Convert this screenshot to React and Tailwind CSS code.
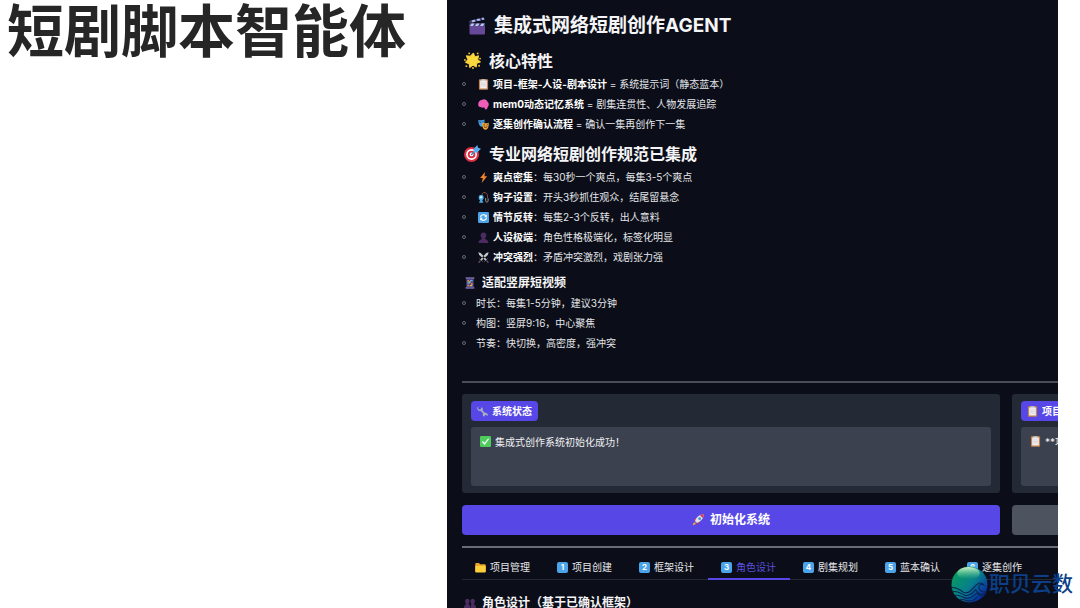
import { useState } from "react";

function Icon({ className = "size-[11px]", children }) {
  return (
    <svg aria-hidden="true" className={`shrink-0 ${className}`} viewBox="0 0 36 36">
      {children}
    </svg>
  );
}

function ClapperIcon() {
  return (
    <Icon className="size-[18px]">
      <path d="M3 13h31v20a2 2 0 0 1-2 2H5a2 2 0 0 1-2-2z" fill="#67499a" />
      <path d="M3 13h31v5H3z" fill="#4a4378" />
      <path d="M7 13h6l-3 5H4zM17 13h6l-3 5h-6zM27 13h6l-3 5h-6z" fill="#b9c8f2" />
      <path d="M2 8 31 1l2 4L4 12z" fill="#4a4378" />
      <path d="m7 7 6-2 2 4-6 2zM17 4l6-1 2 4-6 1zM27 2l4-1 2 4-4 1z" fill="#a9bdf0" />
    </Icon>
  );
}

function SunIcon() {
  return (
    <Icon className="size-[17px]">
      <path
        d="m20 2 3 8 8-2-2 8 6 5-8 3-1 8-7-4-7 5-1-8-8-3 5-6-3-8 8 1z"
        fill="#fbd83d"
        stroke="#fbd83d"
        strokeLinejoin="round"
        strokeWidth="2"
      />
      <g fill="#f3bd3c">
        <circle cx="11" cy="3" r="2" />
        <circle cx="29" cy="3" r="2" />
        <circle cx="34" cy="14" r="2" />
        <circle cx="32" cy="29" r="2" />
        <circle cx="19" cy="34" r="2" />
        <circle cx="5" cy="30" r="2" />
        <circle cx="2" cy="17" r="2" />
      </g>
    </Icon>
  );
}

function TargetIcon() {
  return (
    <Icon className="size-[17px]">
      <circle cx="16" cy="20" r="16" fill="#dd2e44" />
      <circle cx="16" cy="20" r="11.5" fill="#fff" />
      <circle cx="16" cy="20" r="8" fill="#dd2e44" />
      <circle cx="16" cy="20" r="4" fill="#fff" />
      <path d="m15 21 14-14" stroke="#4787b8" strokeWidth="3" />
      <path d="m20 9 8-9 2 6 6 2-8 8h-7z" fill="#55acee" />
    </Icon>
  );
}

function ClipboardIcon() {
  return (
    <Icon>
      <rect x="3" y="1" width="30" height="34" rx="3" fill="#c1834f" />
      <path d="M7 5h22v26H7z" fill="#f3eef0" />
      <path d="M11 1h14v6H11z" fill="#ccd6dd" />
      <path d="M10 13h16M10 18h16M10 23h16" stroke="#c9cbd5" strokeWidth="2" />
    </Icon>
  );
}

function BrainIcon() {
  return (
    <Icon>
      <path
        d="M13 3c7-4 16-1 18 6 5 4 6 12 1 16-1 7-5 10-8 9l-4-7c-5 3-9 1-11-1-5 1-9-3-8-9-1-7 5-14 12-14z"
        fill="#f45fbd"
      />
      <path
        d="M8 13c4-4 8-1 10 1m-8 8c4 1 7-1 8-4m4-11c-3 3 2 6 6 5m-5 10c4 1 7-2 8-5"
        fill="none"
        stroke="#d84fa8"
        strokeWidth="2"
      />
    </Icon>
  );
}

function MasksIcon() {
  return (
    <Icon>
      <path d="M1 3c7 2 13 2 20-1 1 10 0 21-8 23C6 26 1 15 1 3z" fill="#4d9ee0" />
      <path d="m5 10 5 1m4-1 4-2" stroke="#17446f" strokeWidth="3" />
      <path d="M14 12c8 3 14 3 21 0 1 11-2 22-10 23-9 0-12-12-11-23z" fill="#f2a83b" />
      <path d="m18 19 5 1m5 0 4-2M19 25c4 3 8 3 12 0" stroke="#4a2a15" strokeWidth="3" fill="none" />
    </Icon>
  );
}

function BoltIcon() {
  return (
    <Icon>
      <path d="M23 0 7 20h9l-4 16 18-22h-9z" fill="#f4852b" />
    </Icon>
  );
}

function HookIcon() {
  return (
    <Icon>
      <path d="M12 13C12 3 18 1 23 2c7 2 9 8 8 18" fill="none" stroke="#805444" strokeWidth="3" />
      <path d="M3 14c0-6 15-6 15 0 2 6-1 11-4 14l4 7H3l4-7c-4-3-6-8-4-14z" fill="#4ba9df" />
      <circle cx="10" cy="17" r="4" fill="#c8edff" />
      <path d="M25 20v8c0 7 8 7 8 0v-7" fill="none" stroke="#a3a7af" strokeWidth="3" />
    </Icon>
  );
}

function RepeatIcon() {
  return (
    <Icon>
      <rect width="36" height="36" rx="4" fill="#4ba4ea" />
      <path
        d="M8 17c1-9 13-11 18-4M28 19c-1 9-13 11-18 4"
        fill="none"
        stroke="#fff"
        strokeWidth="4"
      />
      <path d="M29 8v9h-9zM7 28v-9h9z" fill="#fff" />
    </Icon>
  );
}

function PersonIcon() {
  return (
    <Icon>
      <path
        d="M18 2c12 0 11 14 5 19 0 4 10 3 11 13v2H2v-2c1-10 11-9 11-13C7 16 6 2 18 2z"
        fill="#4b2c61"
      />
    </Icon>
  );
}

function SwordsIcon() {
  return (
    <Icon>
      <path d="m1 1 8 2 20 22-4 4L4 10zM35 1l-8 2L7 25l4 4 21-19z" fill="#c3c8cf" />
      <path d="m21 31 10-9M5 22l10 9" stroke="#77797e" strokeWidth="3" />
      <path d="m28 28 6 7M8 28l-6 7" stroke="#75506d" strokeWidth="4" />
    </Icon>
  );
}

function PhoneIcon() {
  return (
    <Icon className="size-3">
      <path d="M5 1h26v5H5zM5 30h26v5H5z" fill="#7967a8" />
      <path d="M7 5h22v26H7z" fill="#4e447f" />
      <path d="M10 9h5v5h-5zM21 18h5v5h-5zM10 23h5v5h-5z" fill="#e58a47" />
      <path d="M18 9h8v4h-8zM10 16h7v4h-7z" fill="#55acee" />
      <path d="M17 24h8v4h-8zM15 13h5v4h-5z" fill="#d6bf66" />
    </Icon>
  );
}

function WrenchIcon() {
  return (
    <Icon>
      <path
        d="M5 1 3 7l5 5 5-2 1-6C20 6 20 11 18 15l8 7c8-1 11 6 8 11l-5-4-4 2-1 4c-6-2-6-7-4-11l-8-8C4 18-1 11 1 5z"
        fill="#a8b0bf"
      />
    </Icon>
  );
}

function CheckIcon() {
  return (
    <Icon>
      <rect width="36" height="36" rx="4" fill="#4fcb5e" />
      <path d="m8 18 7 8L28 9" fill="none" stroke="#fff" strokeWidth="4" />
    </Icon>
  );
}

function RocketIcon() {
  return (
    <Icon className="size-3">
      <path d="m4 19 9-7 11 11-7 10-3-9-5-4z" fill="#c7354d" />
      <path d="M35 1C22 1 13 10 9 21l6 6C27 22 35 14 35 1z" fill="#dce3ec" />
      <path d="M35 1c-5 0-8 1-11 3l8 8c2-4 3-7 3-11z" fill="#d93852" />
      <circle cx="23" cy="14" r="4" fill="#4a8fc8" />
      <path d="M10 25c-5 0-7 4-8 9 5-1 9-3 9-7z" fill="#f5a33b" />
    </Icon>
  );
}

function FolderIcon() {
  return (
    <Icon>
      <path d="M1 6c0-2 1-3 3-3h9l4 4h15c2 0 3 1 3 3v22H1z" fill="#e8a22e" />
      <path d="M1 12h34v19c0 2-1 3-3 3H4c-2 0-3-1-3-3z" fill="#fdcf3a" />
    </Icon>
  );
}

function PeopleIcon() {
  return (
    <Icon className="size-3">
      <path
        d="M10 5c8 0 8 11 4 15 0 4 5 3 5 11v4H0v-4c0-8 6-7 6-11C2 16 2 5 10 5zM26 5c8 0 8 11 4 15 0 4 6 3 6 11v4H20v-4c0-8 2-7 2-11-4-4-4-15 4-15z"
        fill="#4b2c61"
      />
    </Icon>
  );
}

function GlobeLogo() {
  return (
    <svg aria-hidden="true" className="size-[37px] shrink-0" viewBox="0 0 72 72">
      <defs>
        <linearGradient id="globe" x1="0.1" y1="0.2" x2="0.9" y2="0.9">
          <stop offset="0" stopColor="#069a62" />
          <stop offset="0.5" stopColor="#087e8b" />
          <stop offset="1" stopColor="#071eaa" />
        </linearGradient>
        <linearGradient id="shine" x1="0" y1="0" x2="0" y2="1">
          <stop offset="0" stopColor="#eaffd9" stopOpacity="0.9" />
          <stop offset="1" stopColor="#5dd08b" stopOpacity="0" />
        </linearGradient>
      </defs>
      <circle cx="36" cy="36" r="35" fill="url(#globe)" />
      <ellipse cx="34" cy="14" rx="22" ry="12" fill="url(#shine)" />
      <g fill="none" stroke="#0b2450" strokeWidth="2">
        <path d="M1 42c10-2 15 4 23 9 9 4 15-3 21-10 6-8 14-11 19-4-8-3-12 2-9 8 3 5 9 7 15 4" />
        <path d="M3 50c10-3 16 4 24 7 10 2 15-5 21-11 5 9 12 11 21 8" />
        <path d="M8 57c9-2 15 5 23 6 10 0 14-7 19-10 5 5 10 7 15 6" />
        <path d="M17 65c8-1 15 4 23 3 6-1 8-7 12-8" />
      </g>
    </svg>
  );
}

const features = [
  { icon: ClipboardIcon, name: "项目-框架-人设-剧本设计", text: " = 系统提示词（静态蓝本）" },
  { icon: BrainIcon, name: "mem0动态记忆系统", text: " = 剧集连贯性、人物发展追踪" },
  { icon: MasksIcon, name: "逐集创作确认流程", text: " = 确认一集再创作下一集" },
];

const rules = [
  { icon: BoltIcon, name: "爽点密集", text: "：每30秒一个爽点，每集3-5个爽点" },
  { icon: HookIcon, name: "钩子设置", text: "：开头3秒抓住观众，结尾留悬念" },
  { icon: RepeatIcon, name: "情节反转", text: "：每集2-3个反转，出人意料" },
  { icon: PersonIcon, name: "人设极端", text: "：角色性格极端化，标签化明显" },
  { icon: SwordsIcon, name: "冲突强烈", text: "：矛盾冲突激烈，戏剧张力强" },
];

const videoNotes = [
  { text: "时长：每集1-5分钟，建议3分钟" },
  { text: "构图：竖屏9:16，中心聚焦" },
  { text: "节奏：快切换，高密度，强冲突" },
];

const tabs = ["项目管理", "项目创建", "框架设计", "角色设计", "剧集规划", "蓝本确认", "逐集创作"];

function BulletList({ items }) {
  return (
    <ul className="text-[10px]">
      {items.map(({ icon: ItemIcon, name, text }) => (
        <li className="flex h-5 items-center whitespace-pre" key={text}>
          <span className="mr-2.5 size-1 shrink-0 rounded-full border border-[#666a76]" />
          {ItemIcon ? (
            <span className="mr-1 ml-0.5">
              <ItemIcon />
            </span>
          ) : null}
          <span>
            {name ? <strong className="font-bold text-white">{name}</strong> : null}
            {text}
          </span>
        </li>
      ))}
    </ul>
  );
}

function StatusCard({ id, labelIcon, label, valueIcon, value }) {
  return (
    <div className="w-[calc(100%-58px)] shrink-0 rounded-[3px] bg-[#232935] px-[9px] py-[7px]">
      <label
        className="flex h-5 w-fit items-center gap-1 rounded bg-[#5747e6] px-1.5 text-[10px] font-bold whitespace-nowrap text-white"
        htmlFor={id}
      >
        {labelIcon}
        {label}
      </label>
      <div className="relative mt-1.5">
        <textarea
          className="block h-[59px] w-full resize-none rounded-[3px] bg-[#3c414f] py-2 pr-2 pl-6 text-[10px] leading-[14px] text-[#f0f1f4] outline-none"
          defaultValue={value}
          id={id}
          readOnly
        />
        <span className="pointer-events-none absolute top-[9px] left-[9px]">{valueIcon}</span>
      </div>
    </div>
  );
}

export default function App() {
  const [activeTab, setActiveTab] = useState("角色设计");

  return (
    <div className="relative grid h-screen grid-cols-[minmax(0,447fr)_minmax(0,611fr)_minmax(0,22fr)] overflow-hidden bg-white font-['Inter','Noto_Sans_CJK_SC',sans-serif]">
      <h1 className="pl-[7px] text-[57px] leading-[64px] font-bold whitespace-nowrap text-[#262626]">
        短剧脚本智能体
      </h1>

      <main className="overflow-hidden bg-[#0b0e18] pt-2 pl-[15px] text-[#e5e6ea]">
        <h2 className="flex h-9 items-center gap-2 pl-1.5 text-[19px] font-bold whitespace-nowrap text-[#f5f5f7]">
          <ClapperIcon />
          集成式网络短剧创作AGENT
        </h2>

        <h3 className="mt-[3px] flex h-[27px] items-center gap-2 pl-0.5 text-base font-bold text-[#f5f5f7]">
          <SunIcon />
          核心特性
        </h3>
        <BulletList items={features} />

        <h3 className="mt-1.5 flex h-[27px] items-center gap-2 pl-0.5 text-base font-bold whitespace-nowrap text-[#f5f5f7]">
          <TargetIcon />
          专业网络短剧创作规范已集成
        </h3>
        <BulletList items={rules} />

        <h4 className="mt-1.5 flex h-5 items-center gap-1.5 pl-0.5 text-xs font-bold text-[#f5f5f7]">
          <PhoneIcon />
          适配竖屏短视频
        </h4>
        <BulletList items={videoNotes} />

        <hr className="mt-7 border-t-2 border-[#4b4e58]" />

        <div className="mt-[11px] flex gap-3">
          <StatusCard
            id="system-status"
            label="系统状态"
            labelIcon={<WrenchIcon />}
            value="集成式创作系统初始化成功！"
            valueIcon={<CheckIcon />}
          />
          <StatusCard
            id="project-status"
            label="项目"
            labelIcon={<ClipboardIcon />}
            value="**项目"
            valueIcon={<ClipboardIcon />}
          />
        </div>

        <div className="mt-3 flex gap-3">
          <button
            className="flex h-[30px] w-[calc(100%-58px)] shrink-0 items-center justify-center gap-1.5 rounded bg-[#5747e6] text-xs font-bold text-white"
            type="button"
          >
            <RocketIcon />
            初始化系统
          </button>
          <button
            aria-label="刷新状态"
            className="h-[30px] w-[calc(100%-58px)] shrink-0 rounded bg-[#4e5360]"
            type="button"
          />
        </div>

        <hr className="mt-[11px] border-t-2 border-[#6b6d76]" />

        <div className="mt-2 flex border-b border-[#252833]" role="tablist">
          {tabs.map((tab, index) => (
            <button
              aria-selected={tab === activeTab}
              className={`-mb-px flex h-6 shrink-0 items-center gap-1 border-b-2 pr-3.5 pl-[13px] text-[10px] whitespace-nowrap ${
                tab === activeTab
                  ? "border-[#5747e6] text-[#5b4fdd]"
                  : "border-transparent text-[#e5e6ea]"
              }`}
              key={tab}
              onClick={() => setActiveTab(tab)}
              role="tab"
              type="button"
            >
              {index === 0 ? (
                <FolderIcon />
              ) : (
                <span className="flex size-[11px] items-center justify-center rounded-[2px] bg-[#4ba4ea] text-[8px] leading-none font-bold text-white">
                  {index}
                </span>
              )}
              {tab}
            </button>
          ))}
        </div>

        <h4 className="mt-[13px] flex h-5 items-center gap-1.5 pl-0.5 text-xs font-bold whitespace-nowrap text-[#f5f5f7]">
          <PeopleIcon />
          角色设计（基于已确认框架）
        </h4>
      </main>

      <div className="absolute right-[7px] bottom-[5px] flex items-center gap-px text-[21px] leading-[38px] font-medium whitespace-nowrap text-[#0c3f87]">
        <GlobeLogo />
        职贝云数
      </div>
    </div>
  );
}
